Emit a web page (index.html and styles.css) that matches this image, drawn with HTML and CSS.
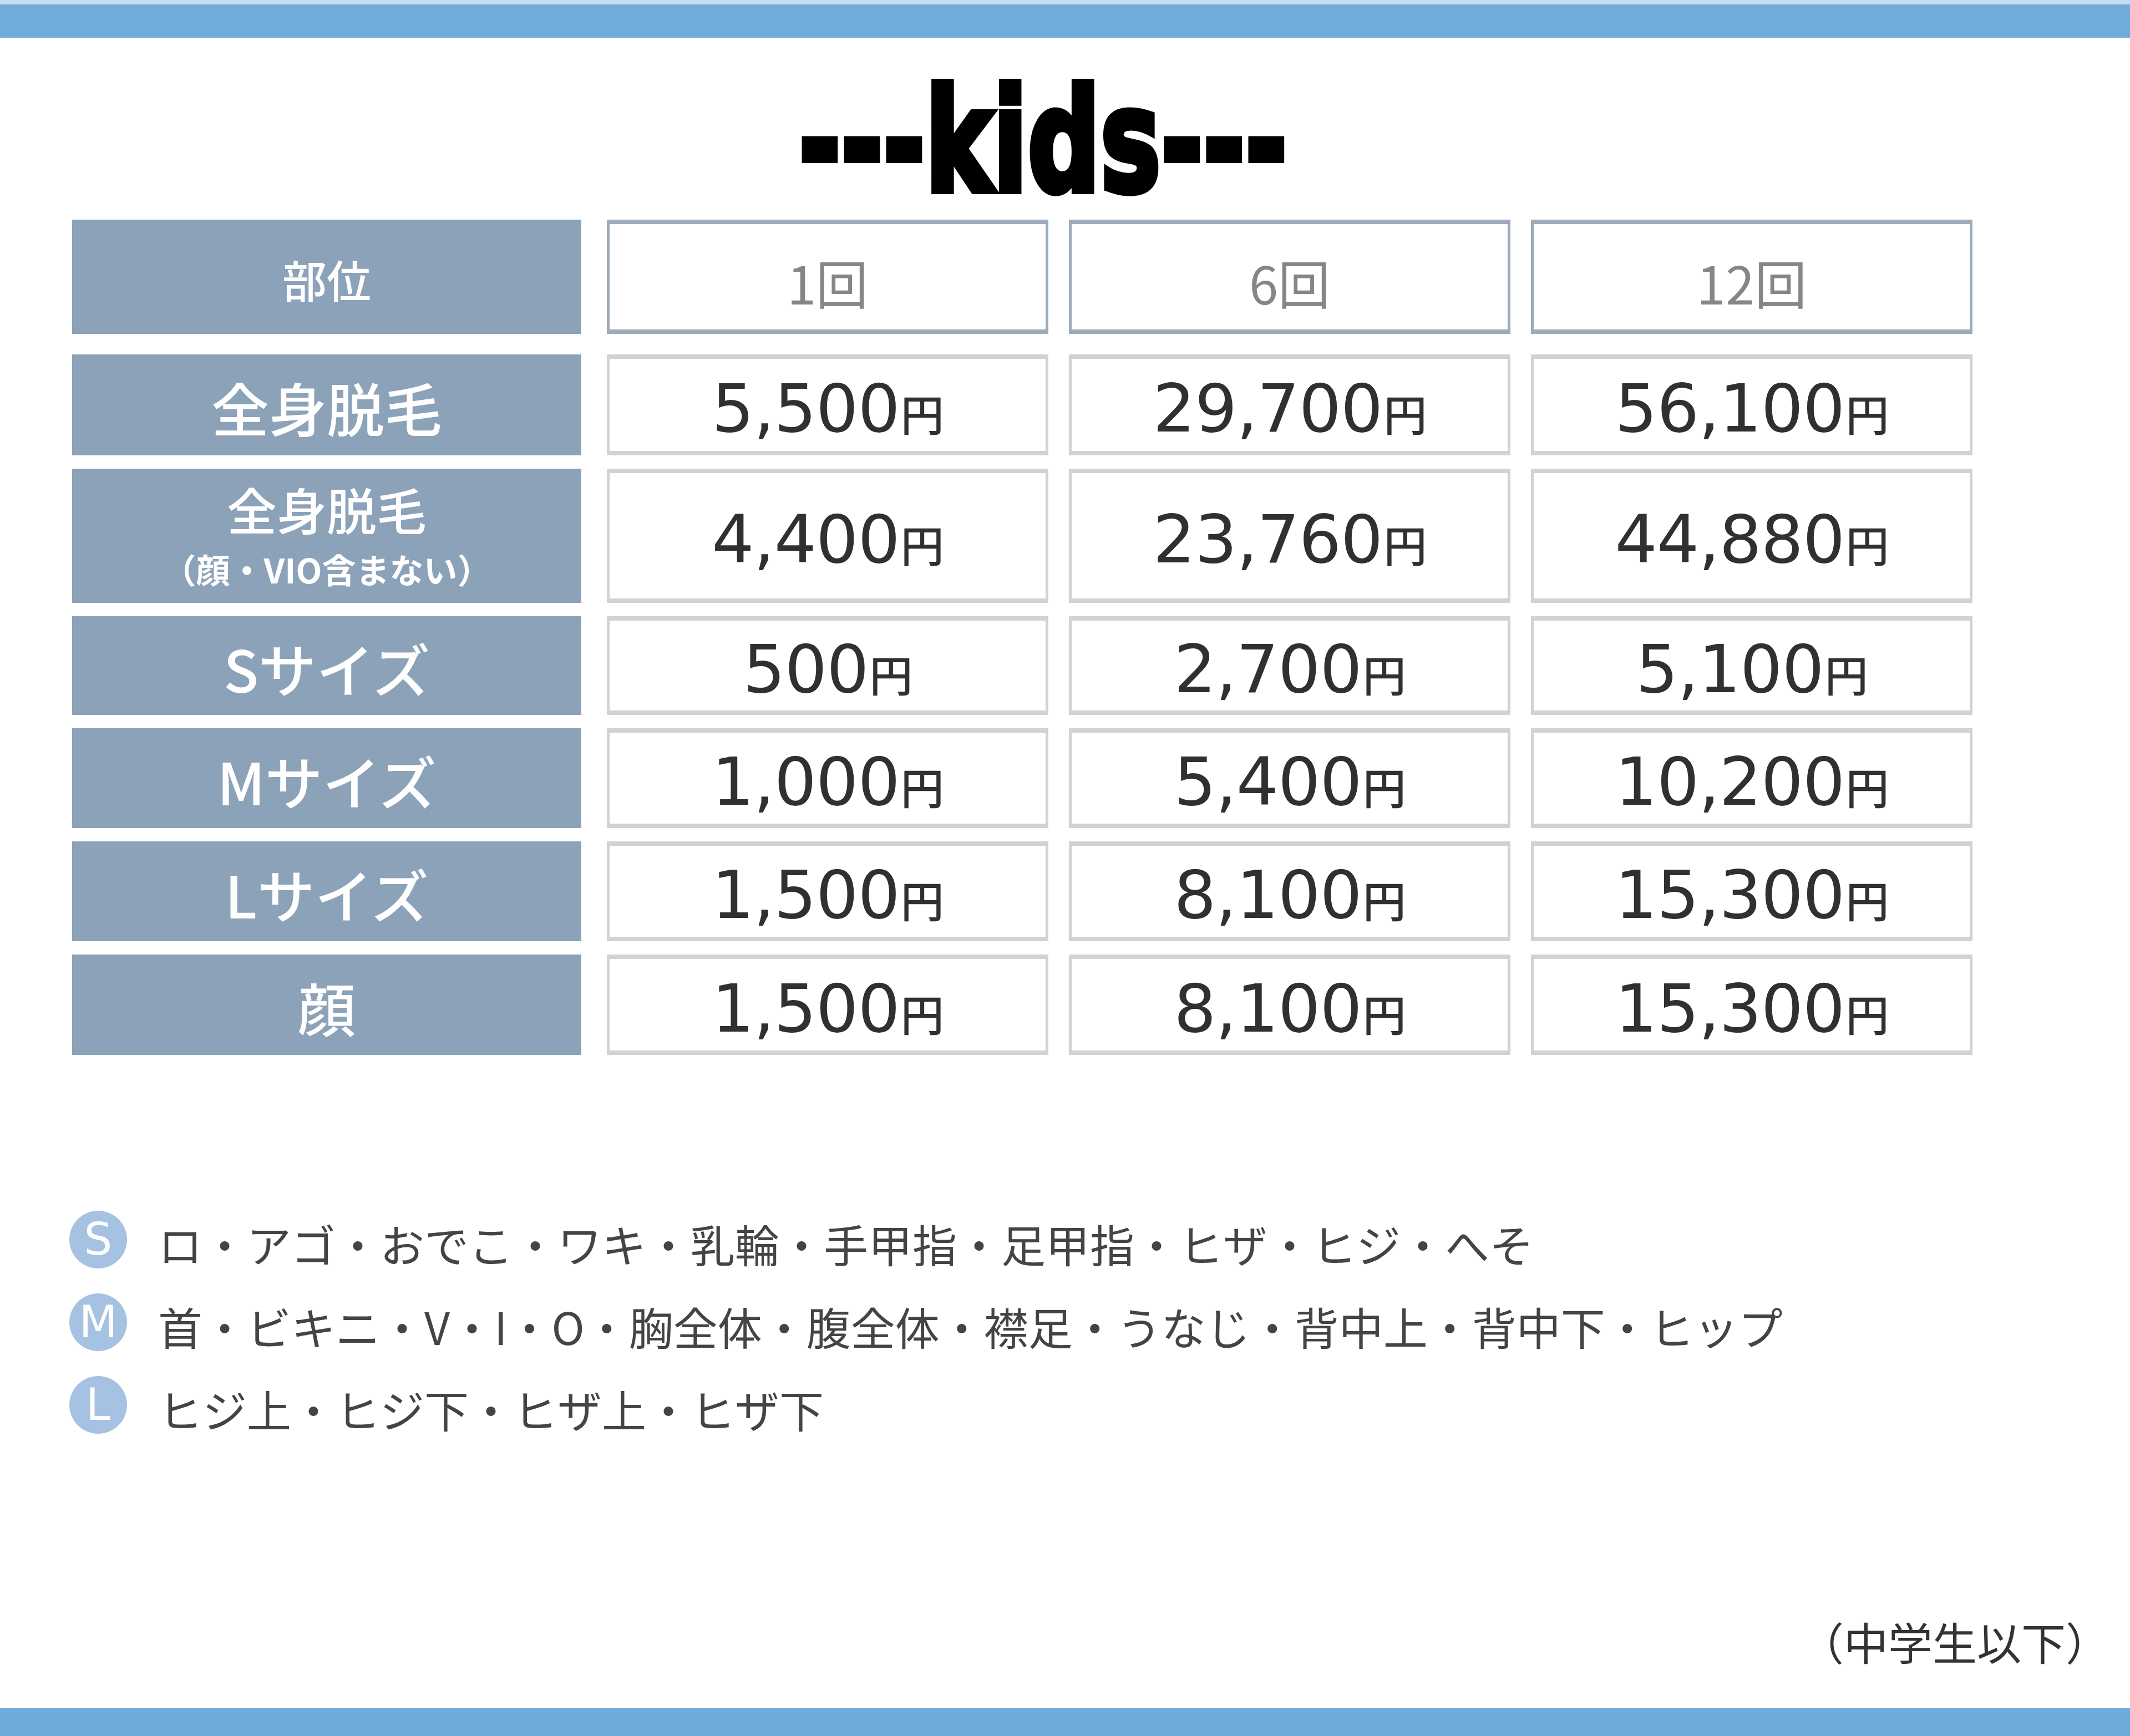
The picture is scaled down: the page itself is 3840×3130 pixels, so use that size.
FILE: index.html
```html
<!DOCTYPE html>
<html lang="ja">
<head>
<meta charset="utf-8">
<title>kids 料金表</title>
<link rel="stylesheet" href="styles.css">
</head>
<body>
<div class="page">
  <div class="bar bar-top"></div>
  <h1 class="title"><span class="title-text">---kids---</span></h1>
  <div class="price-table">
    <div class="thead">
      <div class="label label-head">部位</div>
      <div class="head-cell">1回</div>
      <div class="head-cell">6回</div>
      <div class="head-cell">12回</div>
    </div>
    <div class="tbody">
      <div class="label label-xl">全身脱毛</div>
      <div class="price"><span class="amount">5,500<span class="yen">円</span></span></div>
      <div class="price"><span class="amount">29,700<span class="yen">円</span></span></div>
      <div class="price"><span class="amount">56,100<span class="yen">円</span></span></div>

      <div class="label label-two">
        <span class="label-main">全身脱毛</span>
        <span class="label-sub">（顔・VIO含まない）</span>
      </div>
      <div class="price"><span class="amount">4,400<span class="yen">円</span></span></div>
      <div class="price"><span class="amount">23,760<span class="yen">円</span></span></div>
      <div class="price"><span class="amount">44,880<span class="yen">円</span></span></div>

      <div class="label label-xl">Sサイズ</div>
      <div class="price"><span class="amount">500<span class="yen">円</span></span></div>
      <div class="price"><span class="amount">2,700<span class="yen">円</span></span></div>
      <div class="price"><span class="amount">5,100<span class="yen">円</span></span></div>

      <div class="label label-xl">Mサイズ</div>
      <div class="price"><span class="amount">1,000<span class="yen">円</span></span></div>
      <div class="price"><span class="amount">5,400<span class="yen">円</span></span></div>
      <div class="price"><span class="amount">10,200<span class="yen">円</span></span></div>

      <div class="label label-xl">Lサイズ</div>
      <div class="price"><span class="amount">1,500<span class="yen">円</span></span></div>
      <div class="price"><span class="amount">8,100<span class="yen">円</span></span></div>
      <div class="price"><span class="amount">15,300<span class="yen">円</span></span></div>

      <div class="label label-xl">顔</div>
      <div class="price"><span class="amount">1,500<span class="yen">円</span></span></div>
      <div class="price"><span class="amount">8,100<span class="yen">円</span></span></div>
      <div class="price"><span class="amount">15,300<span class="yen">円</span></span></div>
    </div>
  </div>

  <ul class="legend">
    <li class="legend-row"><span class="badge">S</span><span class="legend-text">ロ・アゴ・おでこ・ワキ・乳輪・手甲指・足甲指・ヒザ・ヒジ・へそ</span></li>
    <li class="legend-row"><span class="badge">M</span><span class="legend-text">首・ビキニ・V・I・O・胸全体・腹全体・襟足・うなじ・背中上・背中下・ヒップ</span></li>
    <li class="legend-row"><span class="badge">L</span><span class="legend-text">ヒジ上・ヒジ下・ヒザ上・ヒザ下</span></li>
  </ul>

  <p class="note">（中学生以下）</p>
  <div class="bar bar-bottom"></div>
</div>
</body>
</html>
```

FILE: styles.css
```css
html, body {
  margin: 0;
  padding: 0;
  background: #ffffff;
}

.page {
  width: 3840px;
  height: 3130px;
  display: flex;
  flex-direction: column;
  font-family: "Noto Sans CJK JP", "Noto Sans", sans-serif;
  overflow: hidden;
}

.bar {
  flex: none;
}

.bar-top {
  height: 60px;
  border-top: 8px solid #c3e0f3;
  background: #70abd9;
}

.bar-bottom {
  margin-top: auto;
  height: 50px;
  background: #6faadb;
}

.title {
  margin: 58px 0 0;
  padding-right: 80px;
  height: 258px;
  font-family: "DejaVu Sans", sans-serif;
  font-weight: 700;
  font-size: 258px;
  line-height: 258px;
  text-align: center;
  color: #000000;
}

.title-text {
  display: inline-block;
  transform: scaleX(0.71);
  -webkit-text-stroke: 12px #000000;
}

.price-table {
  margin: 12px 0 0 130px;
}

.thead,
.tbody {
  display: grid;
  grid-template-columns: 927px repeat(3, 796px);
  column-gap: 37px;
}

.thead {
  grid-template-rows: 206px;
}

.tbody {
  margin-top: 37px;
  grid-template-rows: 182px 242px 178px 180px 180px 181px;
  row-gap: 24px;
}

.label {
  width: 918px;
  background: #8ba2b9;
  color: #ffffff;
  display: flex;
  flex-direction: column;
  align-items: center;
  justify-content: center;
  font-weight: 500;
  line-height: 1;
}

.label-head {
  font-size: 80px;
  padding-top: 6px;
  box-sizing: border-box;
}

.label-xl {
  font-size: 104px;
  padding-top: 8px;
  box-sizing: border-box;
}

.label-two {
  padding-bottom: 10px;
  box-sizing: border-box;
}

.label-main {
  font-size: 90px;
  line-height: 1.45;
}

.label-sub {
  font-size: 61px;
  font-weight: 700;
  line-height: 1.45;
}

.head-cell {
  box-sizing: border-box;
  border: 5px solid #9dabbb;
  border-top-width: 8px;
  border-bottom-width: 8px;
  display: flex;
  align-items: center;
  justify-content: center;
  padding-top: 18px;
  font-size: 94px;
  line-height: 1;
  color: #868686;
}

.price {
  box-sizing: border-box;
  border: 5px solid #d2d2d2;
  border-top-width: 8px;
  border-bottom-width: 8px;
  display: flex;
  align-items: center;
  justify-content: center;
  padding-top: 14px;
}

.amount {
  font-family: "DejaVu Sans", sans-serif;
  font-size: 120px;
  line-height: 1;
  color: #303030;
  letter-spacing: -1px;
}

.yen {
  font-family: "Noto Sans CJK JP", sans-serif;
  font-size: 78px;
  font-weight: 500;
  margin-left: 2px;
}

.legend {
  list-style: none;
  margin: 281px 0 0 125px;
  padding: 0;
  display: flex;
  flex-direction: column;
  gap: 45px;
}

.legend-row {
  display: flex;
  align-items: center;
  height: 104px;
}

.badge {
  flex: none;
  width: 104px;
  height: 104px;
  border-radius: 50%;
  background: #a6c2e2;
  color: #ffffff;
  display: flex;
  align-items: center;
  justify-content: center;
  font-family: "DejaVu Sans", sans-serif;
  font-size: 80px;
  line-height: 1;
}

.legend-text {
  margin-left: 56px;
  padding-top: 12px;
  font-size: 80px;
  line-height: 1;
  color: #444444;
  white-space: nowrap;
}

.note {
  margin: 330px 0 0;
  padding-right: 36px;
  text-align: right;
  font-size: 80px;
  line-height: 86px;
  color: #333333;
}
```
